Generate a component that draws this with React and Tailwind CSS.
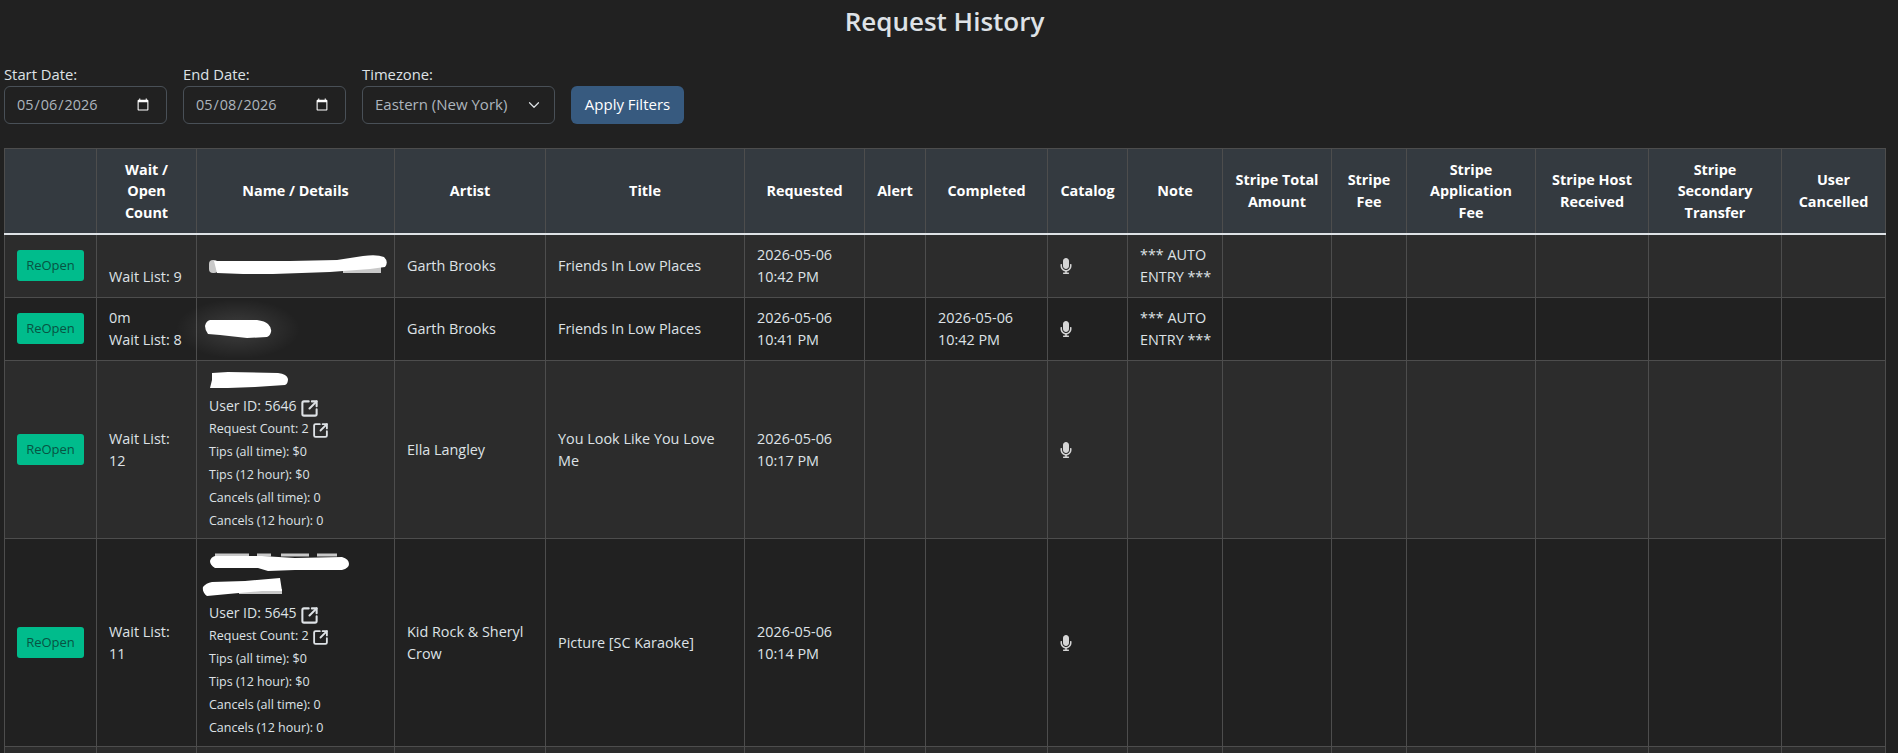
import React from 'react';
import { FaMicrophone } from 'react-icons/fa';
import { SquareArrowOutUpRight } from 'lucide-react';

const headers = [
  '',
  'Wait / Open Count',
  'Name / Details',
  'Artist',
  'Title',
  'Requested',
  'Alert',
  'Completed',
  'Catalog',
  'Note',
  'Stripe Total Amount',
  'Stripe Fee',
  'Stripe Application Fee',
  'Stripe Host Received',
  'Stripe Secondary Transfer',
  'User Cancelled',
];

const rows = [
  {
    wait: ['\u00a0', 'Wait List: 9'],
    blob: 'first',
    artist: 'Garth Brooks',
    title: 'Friends In Low Places',
    requested: ['2026-05-06', '10:42 PM'],
    completed: null,
    note: ['*** AUTO', 'ENTRY ***'],
  },
  {
    wait: ['0m', 'Wait List: 8'],
    blob: 'second',
    artist: 'Garth Brooks',
    title: 'Friends In Low Places',
    requested: ['2026-05-06', '10:41 PM'],
    completed: ['2026-05-06', '10:42 PM'],
    note: ['*** AUTO', 'ENTRY ***'],
  },
  {
    wait: ['Wait List: 12'],
    blob: 'third',
    userId: 5646,
    artist: 'Ella Langley',
    title: 'You Look Like You Love Me',
    requested: ['2026-05-06', '10:17 PM'],
    completed: null,
    note: [],
  },
  {
    wait: ['Wait List: 11'],
    blob: 'fourth',
    userId: 5645,
    artist: 'Kid Rock & Sheryl Crow',
    title: 'Picture [SC Karaoke]',
    requested: ['2026-05-06', '10:14 PM'],
    completed: null,
    note: [],
  },
];

// scribbled-out names from the original capture
const Scribble = ({ kind }) => {
  if (kind === 'first') {
    return (
      <svg width="178" height="22" className="block overflow-visible">
        <rect x="134" y="9" width="38" height="9" fill="#c9c9c9" />
        <rect x="0" y="5" width="9" height="13" rx="4" fill="#c9c9c9" />
        <path d="M5 6 L81 6 L128 5 L154 1 Q168 -1 175 2 Q180 7 176 12 L161 14 L121 17 L64 19 L34 19 L8 18 Z" fill="#fff" />
      </svg>
    );
  }
  if (kind === 'second') {
    return (
      <svg width="66" height="22" className="block overflow-visible">
        <defs>
          <radialGradient id="glow">
            <stop offset="0%" stopColor="#fff" stopOpacity="0.13" />
            <stop offset="100%" stopColor="#fff" stopOpacity="0" />
          </radialGradient>
        </defs>
        <ellipse cx="29" cy="11" rx="62" ry="30" fill="url(#glow)" />
        <path d="M-4 8 Q-3 3 1 2 L48 2 Q56 3 59 6 Q63 10 62 14 Q61 18 58 19 L38 20 L11 17 L-1 16 Q-4 12 -4 8 Z" fill="#fff" />
      </svg>
    );
  }
  if (kind === 'third') {
    return (
      <svg width="80" height="24" className="block overflow-visible">
        <path d="M3 3 L19 2 L69 3 Q78 4 79 9 Q79 14 76 15 L46 17 L19 18 L1 18 L3 10 Z" fill="#fff" />
      </svg>
    );
  }
  return (
    <svg width="140" height="52" className="block overflow-visible">
      <path d="M6 6 H40 M48 6 H62 M72 6 H100 M108 6 H128" stroke="#c9c9c9" strokeWidth="3" fill="none" />
      <rect x="30" y="40" width="43" height="5" fill="#c9c9c9" />
      <path d="M1 12 Q2 8 6 7 L53 7 L86 9 L133 8 Q140 10 140 15 Q140 19 133 21 L86 21 L59 22 L49 19 L6 19 Q1 16 1 12 Z" fill="#fff" />
      <path d="M-6 38 Q-3 34 3 33 L36 32 L71 29 L73 42 L53 42 L19 45 L-2 47 Q-7 43 -6 38 Z" fill="#fff" />
    </svg>
  );
};

const Details = ({ userId, className }) => (
  <div className={`leading-[23px] ${className}`}>
    <div className="text-[14px]">
      User ID: {userId} <SquareArrowOutUpRight size={19} strokeWidth={2.6} className="-my-1 inline align-[-3px]" />
    </div>
    <div className="text-[12.5px]">
      Request Count: 2 <SquareArrowOutUpRight size={17} strokeWidth={2.6} className="-my-1 inline align-[-2px]" />
    </div>
    <div className="text-[12.5px]">Tips (all time): $0</div>
    <div className="text-[12.5px]">Tips (12 hour): $0</div>
    <div className="text-[12.5px]">Cancels (all time): 0</div>
    <div className="text-[12.5px]">Cancels (12 hour): 0</div>
  </div>
);

const cell = 'border border-[#4d4d4d] px-3 py-[9.4px] align-middle';

const App = () => {
  return (
    <div className="h-screen overflow-hidden bg-[#212121] pl-1 pr-[13px] pt-[4px] text-[14.4px] leading-[21.6px] text-[#dee2e6] [font-family:'Open_Sans',sans-serif]">
      <h2 className="mb-[26px] text-center text-[26px] leading-[34px] font-semibold">Request History</h2>

      {/* Filters */}
      <div className="mb-6 flex items-end gap-4">
        <div>
          <label className="mb-px block text-[14.8px] leading-[21px]">Start Date:</label>
          <input
            type="date"
            defaultValue="2026-05-06"
            className="h-[38px] w-[163px] rounded-md border border-[#495057] bg-[#212121] pr-[14px] pl-[11px] text-[#adb5bd] [color-scheme:dark]"
          />
        </div>
        <div>
          <label className="mb-px block text-[14.8px] leading-[21px]">End Date:</label>
          <input
            type="date"
            defaultValue="2026-05-08"
            className="h-[38px] w-[163px] rounded-md border border-[#495057] bg-[#212121] pr-[14px] pl-[11px] text-[#adb5bd] [color-scheme:dark]"
          />
        </div>
        <div>
          <label className="mb-px block text-[14.8px] leading-[21px]">Timezone:</label>
          <div className="relative">
            <select className="h-[38px] w-[193px] appearance-none rounded-md border border-[#495057] bg-[#212121] px-3 text-[15px] text-[#adb5bd]">
              <option>Eastern (New York)</option>
            </select>
            <svg width="12" height="12" viewBox="0 0 16 16" className="absolute top-[13px] right-[15px]">
              <path d="M2 5l6 6 6-6" fill="none" stroke="#dee2e6" strokeWidth="1.6" strokeLinecap="round" strokeLinejoin="round" />
            </svg>
          </div>
        </div>
        <button className="h-[38px] w-[113px] rounded-md bg-[#375a7f] text-[15px] text-white">Apply Filters</button>
      </div>

      {/* Requests table */}
      <table className="w-[1881px] table-fixed border-collapse">
        <colgroup>
          <col className="w-[92px]" />
          <col className="w-[100px]" />
          <col className="w-[198px]" />
          <col className="w-[151px]" />
          <col className="w-[199px]" />
          <col className="w-[120px]" />
          <col className="w-[61px]" />
          <col className="w-[122px]" />
          <col className="w-[80px]" />
          <col className="w-[95px]" />
          <col className="w-[109px]" />
          <col className="w-[75px]" />
          <col className="w-[129px]" />
          <col className="w-[113px]" />
          <col className="w-[133px]" />
          <col className="w-[104px]" />
        </colgroup>
        <thead>
          <tr className="bg-[#343a40] text-white">
            {headers.map((h, i) => (
              <th key={i} className="border border-b-2 border-[#4d4d4d] border-b-[#dee2e6] px-3 py-[9.6px] text-center align-middle font-bold">
                {h}
              </th>
            ))}
          </tr>
        </thead>
        <tbody>
          {rows.map((r, i) => (
            <tr key={i} className={i % 2 === 0 ? 'bg-[#2c2c2c]' : 'bg-[#212121]'}>
              <td className={cell}>
                <button className="block h-[31px] w-[67px] rounded-[3px] bg-[#00bc8c] text-[13px] text-[#075443]">ReOpen</button>
              </td>
              <td className={cell}>
                {r.wait.map((w) => (
                  <div key={w}>{w}</div>
                ))}
              </td>
              <td className={cell}>
                <Scribble kind={r.blob} />
                {r.userId && <Details userId={r.userId} className={r.blob === 'third' ? '-mb-[3.5px]' : '-mb-[2px]'} />}
              </td>
              <td className={cell}>{r.artist}</td>
              <td className={cell}>{r.title}</td>
              <td className={cell}>
                {r.requested.map((t) => (
                  <div key={t}>{t}</div>
                ))}
              </td>
              <td className={cell}></td>
              <td className={cell}>
                {r.completed && r.completed.map((t) => <div key={t}>{t}</div>)}
              </td>
              <td className={cell}>
                <FaMicrophone size={16} className="-ml-[2px] text-[#d5d5d5]" />
              </td>
              <td className={cell}>
                {r.note.map((t) => (
                  <div key={t} className="whitespace-nowrap">{t}</div>
                ))}
              </td>
              <td className={cell}></td>
              <td className={cell}></td>
              <td className={cell}></td>
              <td className={cell}></td>
              <td className={cell}></td>
              <td className={cell}></td>
            </tr>
          ))}
          <tr className="h-[60px] bg-[#2c2c2c]">
            {headers.map((h, i) => (
              <td key={i} className={cell}></td>
            ))}
          </tr>
        </tbody>
      </table>
    </div>
  );
};

export default App;
